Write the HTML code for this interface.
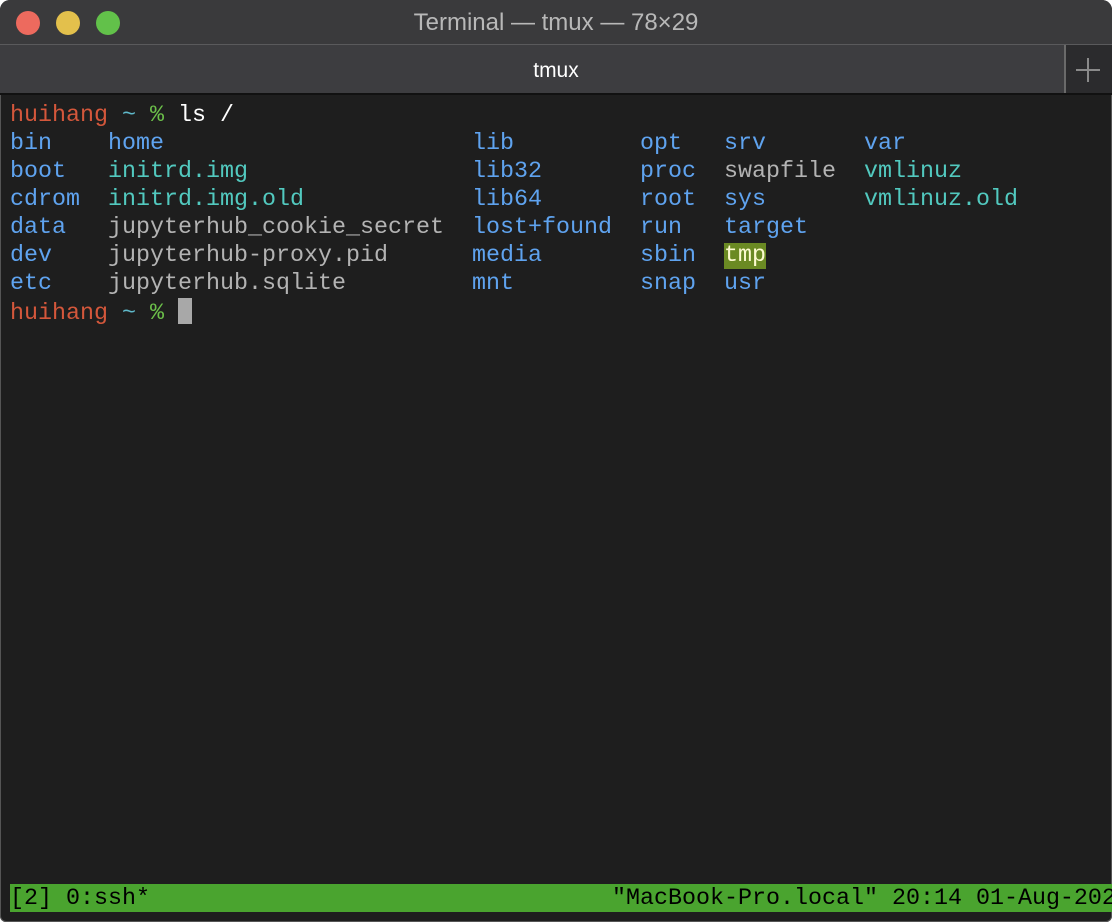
<!DOCTYPE html>
<html><head><meta charset="utf-8"><style>
html,body{margin:0;padding:0;background:#fff;}
.win{position:absolute;left:0;top:0;width:1112px;height:922px;background:#1e1e1e;border-radius:10px 10px 6px 6px;overflow:hidden;box-shadow:inset 0 0 0 1px #555;}
.title{position:absolute;left:0;top:0;width:1112px;height:45px;background:#3a3a3c;border-bottom:1px solid #5a5a5c;box-sizing:border-box;}
.title .t{position:absolute;left:0;right:0;top:9px;text-align:center;font:24px "Liberation Sans",sans-serif;color:#b8b8b8;}
.dot{position:absolute;top:11px;width:24px;height:24px;border-radius:50%;}
.tab{position:absolute;left:0;top:45px;width:1112px;height:50px;background:#3d3d40;border-bottom:2px solid #111;box-sizing:border-box;}
.tab .t{position:absolute;left:0;width:1112px;top:14px;text-align:center;font:21px "Liberation Sans",sans-serif;color:#fff;}
.plus{position:absolute;left:1064px;top:0;width:48px;height:48px;background:#2b2b2d;border-left:2px solid #6a6a6a;box-sizing:border-box;}
pre{position:absolute;left:10px;top:102px;margin:0;font:23.33px/28px "Liberation Mono",monospace;color:#e0e0e0;}
.r{color:#d4573b}.c{color:#5fb8c9}.g{color:#6cc04a}.b{color:#5fa3ef}.k{color:#52c9bf}.y{color:#b3b3b3}.w{color:#fff}
.tmp{background:#6b8a23;color:#fdfbd0}
.cur{display:inline-block;width:14px;height:26px;background:#a8a8a8;vertical-align:-5px}
.status{position:absolute;left:10px;top:884px;width:1102px;height:28px;background:#4aa42f;overflow:hidden;}
.status pre{left:0;top:1px;color:#000;white-space:pre}
</style></head><body>
<div class="win">
<div class="title">
<div class="dot" style="left:16px;background:#ed6a5e"></div>
<div class="dot" style="left:56px;background:#e3c04c"></div>
<div class="dot" style="left:96px;background:#62c14a"></div>
<div class="t">Terminal — tmux — 78×29</div>
</div>
<div class="tab"><div class="t">tmux</div>
<div class="plus"><svg width="46" height="48" viewBox="0 0 46 48"><path d="M22 13V37M10 25H34" stroke="#8a8a8a" stroke-width="2"/></svg></div>
</div>
<pre><span class="r">huihang</span> <span class="c">~</span> <span class="g">%</span> <span class="w">ls /</span>
<span class="b">bin</span>    <span class="b">home</span>                      <span class="b">lib</span>         <span class="b">opt</span>   <span class="b">srv</span>       <span class="b">var</span>
<span class="b">boot</span>   <span class="k">initrd.img</span>                <span class="b">lib32</span>       <span class="b">proc</span>  <span class="y">swapfile</span>  <span class="k">vmlinuz</span>
<span class="b">cdrom</span>  <span class="k">initrd.img.old</span>            <span class="b">lib64</span>       <span class="b">root</span>  <span class="b">sys</span>       <span class="k">vmlinuz.old</span>
<span class="b">data</span>   <span class="y">jupyterhub_cookie_secret</span>  <span class="b">lost+found</span>  <span class="b">run</span>   <span class="b">target</span>
<span class="b">dev</span>    <span class="y">jupyterhub-proxy.pid</span>      <span class="b">media</span>       <span class="b">sbin</span>  <span class="tmp">tmp</span>
<span class="b">etc</span>    <span class="y">jupyterhub.sqlite</span>         <span class="b">mnt</span>         <span class="b">snap</span>  <span class="b">usr</span>
<span class="r">huihang</span> <span class="c">~</span> <span class="g">%</span> <span class="cur"></span></pre>
<div class="status"><pre>[2] 0:ssh*                                 "MacBook-Pro.local" 20:14 01-Aug-2020</pre></div>
</div>
</body></html>
